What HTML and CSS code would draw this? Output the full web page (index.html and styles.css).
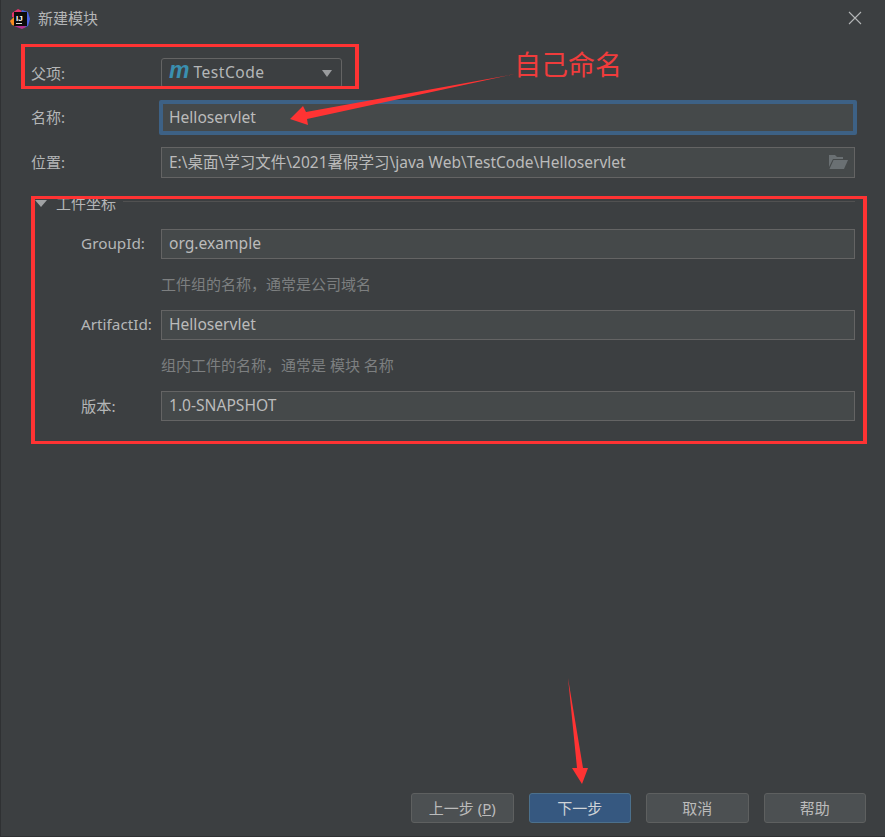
FILE: index.html
```html
<!DOCTYPE html>
<html lang="zh-CN">
<head>
<meta charset="utf-8">
<title>新建模块</title>
<link rel="stylesheet" href="styles.css">
</head>
<body>
<div class="dialog">
  <header class="titlebar">
    <svg class="app-icon" width="22" height="22" viewBox="0 0 22 22">
      <path d="M3 5 L9 1 L13 3 L9 10 L3 9Z" fill="#e5336b"/>
      <path d="M13 2 L19 4 L21 11 L19 18 L14 20 L10 10Z" fill="#4a62e0"/>
      <path d="M1 13 L5 9 L7 18 L3 17Z" fill="#f78c1e"/>
      <path d="M5 18 L13 21 L17 19 L8 12Z" fill="#b5308f"/>
      <rect x="5" y="4" width="13" height="14" fill="#0c0c0c"/>
      <rect x="7" y="15" width="6" height="1" fill="#ddd"/>
      <text class="ij" x="7" y="13">IJ</text>
    </svg>
    <span class="title">新建模块</span>
    <svg class="close" width="14" height="14" viewBox="0 0 14 14"><path d="M1 1 L13 13 M13 1 L1 13" stroke="#b4b6b7" stroke-width="1.1" fill="none"/></svg>
  </header>

  <main class="form">
    <div class="row row-parent">
      <label class="label">父项:</label>
      <div class="select">
        <span class="maven">m</span>
        <span class="select-text">TestCode</span>
        <span class="caret"></span>
      </div>
    </div>
    <div class="row row-name">
      <label class="label">名称:</label>
      <div class="field field-focus">Helloservlet</div>
    </div>
    <div class="row row-location">
      <label class="label">位置:</label>
      <div class="field field-path">
        <span>E:\桌面\学习文件\2021暑假学习\java Web\TestCode\Helloservlet</span>
        <svg class="folder" width="20" height="16" viewBox="0 0 20 16">
          <path d="M1 1 H7 L9 3 H15 V5 H5 L1 13Z" fill="#6a7073"/>
          <path d="M5.5 6 H20 L16 15 H1.5Z" fill="#6a7073"/>
        </svg>
      </div>
    </div>

    <section class="group">
      <div class="group-head">
        <span class="tri"></span>
        <span class="group-title">工件坐标</span>
        <span class="group-line"></span>
      </div>
      <div class="row row-sub row-first">
        <label class="label label-sub">GroupId:</label>
        <div class="field">org.example</div>
      </div>
      <p class="hint">工件组的名称，通常是公司域名</p>
      <div class="row row-sub">
        <label class="label label-sub">ArtifactId:</label>
        <div class="field">Helloservlet</div>
      </div>
      <p class="hint">组内工件的名称，通常是 模块 名称</p>
      <div class="row row-sub">
        <label class="label label-sub">版本:</label>
        <div class="field">1.0-SNAPSHOT</div>
      </div>
    </section>
  </main>

  <footer class="footer">
    <button class="btn">上一步 (<u>P</u>)</button>
    <button class="btn btn-primary">下一步</button>
    <button class="btn">取消</button>
    <button class="btn">帮助</button>
  </footer>

  <div class="mark mark-parent"></div>
  <div class="mark mark-group"></div>
  <span class="note">自己命名</span>
  <svg class="arrows" width="885" height="837" viewBox="0 0 885 837">
    <path d="M515 74 L306 112 L303 106 L290 119 L308 125 L307 119Z" fill="#ff3333"/>
    <path d="M568 678 L577 768 L572 768 L582 784 L588 768 L583 768Z" fill="#ff3333"/>
  </svg>
</div>
</body>
</html>
```
FILE: styles.css
```css
* { box-sizing: border-box; }
html, body { margin: 0; padding: 0; }
body {
  width: 885px;
  height: 837px;
  overflow: hidden;
  font-family: "Noto Sans", "Noto Sans CJK SC", sans-serif;
  font-size: 15px;
  color: #b4b6b7;
  background: #3c3f41;
}
.dialog {
  position: relative;
  width: 885px;
  height: 837px;
  display: flex;
  flex-direction: column;
  background: #3c3f41;
  border-left: 1px solid #2f3133;
  border-bottom: 1px solid #2f3133;
}
.titlebar {
  height: 37px;
  display: flex;
  align-items: center;
  padding: 0 23px 0 8px;
  flex: none;
}
.app-icon { flex: none; }
.ij { font: 700 8px "Liberation Sans", sans-serif; fill: #fff; }
.title { margin-left: 7px; font-size: 15px; color: #b4b6b7; padding-bottom: 3px; }
.close { margin-left: auto; margin-top: -2px; }
.form {
  padding: 0 30px 0 30px;
  display: flex;
  flex-direction: column;
}
.row { display: flex; align-items: center; }
.label { flex: none; width: 130px; font-size: 15px; padding-bottom: 2px; }
.row-parent { margin-top: 21px; height: 30px; }
.select {
  width: 181px;
  height: 30px;
  border: 1px solid #646464;
  border-radius: 3px;
  background: #3c3f41;
  display: flex;
  align-items: center;
  padding: 0 8px;
}
.maven {
  font: italic 700 23px "Liberation Sans", sans-serif;
  color: #3a8fb0;
  line-height: 1;
  margin-right: 4px;
  margin-top: -5px;
  margin-left: -1px;
}
.select-text { font-size: 15.6px; letter-spacing: 0.5px; padding-bottom: 2px; }
.caret {
  margin-left: auto;
  margin-right: 1px;
  border-left: 5.5px solid transparent;
  border-right: 5.5px solid transparent;
  border-top: 7px solid #9a9c9e;
}
.field {
  flex: 1;
  height: 30px;
  border: 1px solid #646464;
  background: #45494a;
  padding: 0 7px 2px;
  display: flex;
  align-items: center;
  font-size: 15.6px;
  color: #bbbbbb;
  white-space: nowrap;
}
.row-name { margin-top: 12px; height: 35px; }
.field-focus {
  height: 35px;
  margin: 0 -2px 0 -2px;
  border: 4px solid #3d6185;
  border-radius: 2px;
  padding: 0 6px 2px;
}
.row-location { margin-top: 12px; height: 31px; }
.field-path { height: 31px; justify-content: space-between; padding-right: 6px; font-size: 15.5px; }
.group { margin-top: 18px; display: flex; flex-direction: column; }
.group-head {
  height: 16px;
  display: flex;
  align-items: center;
}
.tri {
  margin-left: 4px;
  border-left: 6px solid transparent;
  border-right: 6px solid transparent;
  border-top: 7px solid #a0a2a4;
  margin-top: -2px;
}
.group-title { margin-left: 9px; font-size: 15px; margin-top: -4px; }
.group-line { flex: 1; height: 1px; background: #515151; margin-left: 7px; margin-top: -5px; }
.row-sub { height: 30px; margin-top: 0; }
.row-first { margin-top: 17px; }
.label-sub { padding-left: 50px; font-size: 15.3px; }
.hint {
  margin: 0;
  height: 51px;
  display: flex;
  align-items: center;
  padding: 0 0 2px 130px;
  font-size: 15px;
  color: #7d7f80;
}
.footer {
  margin-top: auto;
  padding: 0 19px 13px 0;
  display: flex;
  justify-content: flex-end;
  gap: 15px;
}
.btn {
  width: 102.5px;
  height: 30px;
  padding: 0 0 2px;
  border: 1px solid #5e6060;
  border-radius: 3px;
  background: #4c5052;
  color: #bbbbbb;
  font-family: "Noto Sans", "Noto Sans CJK SC", sans-serif;
  font-size: 15px;
}
.btn-primary { background: #365880; border-color: #4c708c; color: #d0d4d8; }
.mark {
  position: absolute;
  border: solid #ff3333;
  border-width: 3px 4px;
  pointer-events: none;
}
.mark-parent { left: 20px; top: 44px; width: 338px; height: 45px; }
.mark-group { left: 30px; top: 196px; width: 836px; height: 248px; }
.note {
  position: absolute;
  left: 513px;
  top: 46px;
  font-size: 27px;
  line-height: 38px;
  color: #f03c3c;
}
.arrows { position: absolute; left: -1px; top: 0; pointer-events: none; }
```
